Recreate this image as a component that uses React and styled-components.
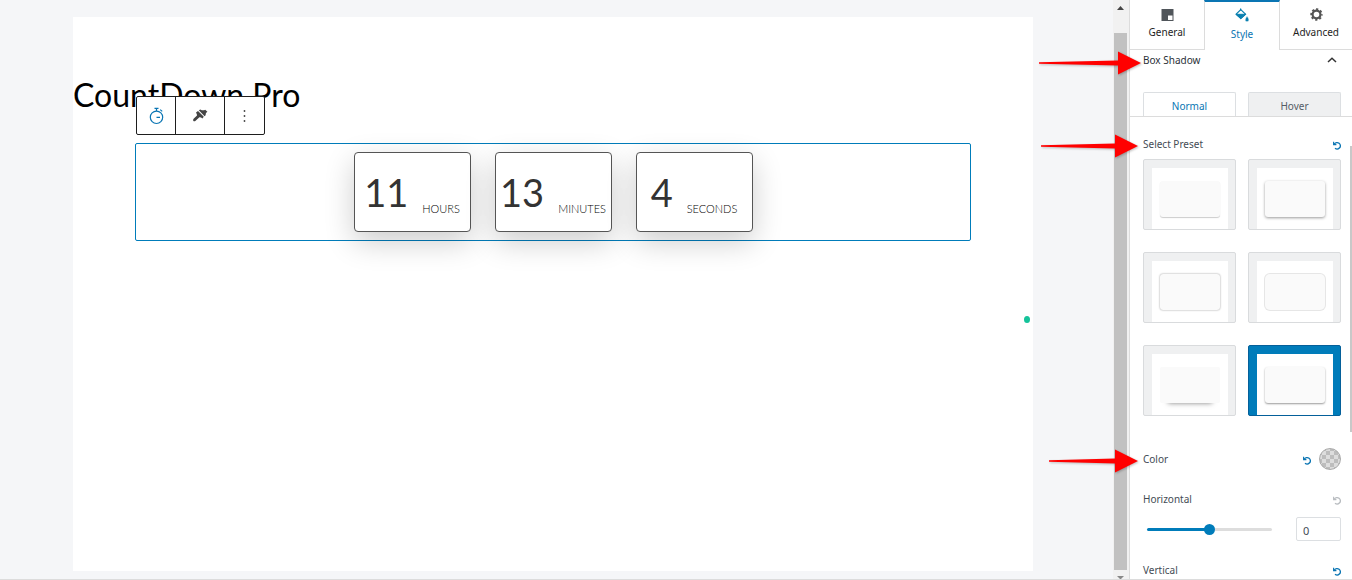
import React, { useState } from "react";
import styled, { createGlobalStyle } from "styled-components";

const GlobalStyle = createGlobalStyle`
  * {
    box-sizing: border-box;
  }

  body {
    margin: 0;
    font-family: "Noto Sans", sans-serif;
    font-size: 10px;
    color: #444c55;
  }

  button, input {
    font-family: inherit;
    font-size: inherit;
  }
`;

const Shell = styled.div`
  display: flex;
  height: 100vh;
  overflow: hidden;
  background-color: #f5f6f8;
  border-bottom: 1px solid #dcdcdc;
`;

const Editor = styled.main`
  flex: 1;
  min-width: 0;
  display: flex;
  padding: 17px 80px 8px 73px;
`;

const Canvas = styled.article`
  position: relative;
  flex: 1;
  background-color: #ffffff;
`;

const Title = styled.h1`
  margin: 52px 0 22px;
  font-family: Lato, sans-serif;
  font-size: 32px;
  font-weight: 400;
  line-height: 52px;
  color: #000000;
`;

const Block = styled.section`
  position: relative;
  display: flex;
  justify-content: center;
  gap: 24px;
  margin: 0 62px;
  padding: 8px;
  border: 1px solid #007cba;
  border-radius: 2px;
`;

const Toolbar = styled.div`
  position: absolute;
  left: 0;
  bottom: calc(100% + 9px);
  display: flex;
  background-color: #ffffff;
  border: 1px solid #1e1e1e;
  border-radius: 2px;
`;

const ToolButton = styled.button`
  display: flex;
  align-items: center;
  justify-content: center;
  width: ${(props) => props.$width}px;
  height: 37px;
  padding: 0;
  border: none;
  border-left: ${(props) => (props.$first ? "none" : "1px solid #1e1e1e")};
  background: none;
  color: ${(props) => (props.$first ? "#0a75b3" : "#444444")};
  cursor: pointer;
`;

const TimeBox = styled.div`
  display: flex;
  align-items: center;
  justify-content: center;
  gap: 14px;
  width: 117px;
  height: 80px;
  border: 1px solid #555555;
  border-radius: 4px;
  background-color: #ffffff;
  box-shadow: 0 10px 30px rgba(0, 0, 0, 0.2);
  font-family: Lato, sans-serif;
  color: #333333;
`;

const Digits = styled.span`
  font-size: 38px;
  line-height: 48px;
`;

const Unit = styled.span`
  padding-top: 34px;
  font-size: 11px;
  font-weight: 300;
  line-height: 14px;
  text-transform: uppercase;
  color: #000000;
`;

const StatusDot = styled.span`
  position: absolute;
  top: 299px;
  right: 3px;
  width: 6px;
  height: 7px;
  border-radius: 50%;
  background-color: #15c39a;
`;

const ScrollTrack = styled.div`
  display: flex;
  flex-direction: column;
  align-items: center;
  justify-content: space-between;
  width: 16px;
  padding: 6px 1px 0 0;
  background-color: #f1f1f1;
`;

const ScrollThumb = styled.div`
  flex: 1;
  width: 13px;
  margin: 23px 0 6px;
  background-color: #c1c1c1;
`;

const Sidebar = styled.aside`
  position: relative;
  width: 223px;
  flex-shrink: 0;
  border-left: 1px solid #dcdcdc;
  background-color: #ffffff;
`;

const Tabs = styled.div`
  display: grid;
  grid-template-columns: 74px 76px 1fr;
  height: 50px;
`;

const Tab = styled.button`
  display: flex;
  flex-direction: column;
  align-items: center;
  gap: ${(props) => (props.$active ? 3 : 2)}px;
  padding: ${(props) => (props.$active ? 6 : 7)}px 0 0;
  border: solid #dcdcdc;
  border-width: ${(props) => (props.$active ? "2px 1px 0" : "0 0 1px")};
  border-top-color: #0a75b3;
  background: none;
  line-height: 16px;
  color: ${(props) => (props.$active ? "#0a75b3" : "#1e1e1e")};
  cursor: pointer;
`;

const PanelHeader = styled.button`
  position: relative;
  display: flex;
  align-items: center;
  justify-content: space-between;
  width: 100%;
  height: 20px;
  padding: 0 15px 0 13px;
  border: none;
  background: none;
  color: #2b3138;
  cursor: pointer;
`;

const SubTabs = styled.div`
  display: grid;
  grid-template-columns: 1fr 1fr;
  gap: 12px;
  margin-top: 22px;
  padding: 0 11px 0 13px;
  border-bottom: 1px solid #dcdcdc;
`;

const SubTab = styled.button`
  height: 24px;
  padding: 2px 0 0;
  border: 1px solid #dcdfe2;
  border-bottom: none;
  border-radius: 2px 2px 0 0;
  background-color: ${(props) => (props.$active ? "#ffffff" : "#eff0f1")};
  color: ${(props) => (props.$active ? "#0a75b3" : "#555d66")};
  cursor: pointer;
`;

const Controls = styled.div`
  display: flex;
  flex-direction: column;
  padding: 16px 11px 0 13px;
`;

const Row = styled.div`
  position: relative;
  display: flex;
  align-items: center;
  gap: 8px;
  height: 22px;
`;

const ColorRow = styled(Row)`
  margin-bottom: 18px;
`;

const Label = styled.label`
  flex: 1;
`;

const ResetButton = styled.button`
  display: flex;
  padding: 2px 0 0;
  border: none;
  background: none;
  color: ${(props) => (props.disabled ? "#b8bcc0" : "#0a75b3")};
  cursor: pointer;
`;

const PresetGrid = styled.div`
  display: grid;
  grid-template-columns: 1fr 1fr;
  gap: 22px 12px;
  margin: 4px 0 32px;
`;

const Preset = styled.label`
  height: 71px;
  padding: 8px 7px 0 8px;
  border: 1px solid ${(props) => (props.$active ? "#05609a" : "#d9dbdd")};
  border-radius: 2px;
  background-color: ${(props) => (props.$active ? "#007cba" : "#eff0f1")};
  cursor: pointer;
`;

const PresetRadio = styled.input`
  position: absolute;
  opacity: 0;
`;

const PresetStage = styled.span`
  display: flex;
  justify-content: center;
  height: 61px;
  padding-top: 13px;
  background-color: #ffffff;
`;

const PresetSample = styled.span`
  width: 60px;
  height: 36px;
  border-radius: ${(props) => props.$radius}px;
  background-color: #fafafa;
  box-shadow: ${(props) => props.$shadow};
`;

const Swatch = styled.button`
  width: 22px;
  height: 22px;
  padding: 0;
  border: 1px solid #aaaaaa;
  border-radius: 50%;
  background: repeating-conic-gradient(#bdbdbd 0 25%, #dddddd 0 50%) 50% / 8px 8px;
  cursor: pointer;
`;

const SliderRow = styled.div`
  display: flex;
  align-items: center;
  justify-content: space-between;
  margin: 7px 0 18px;
  padding-left: 4px;
`;

const Slider = styled.input`
  width: 125px;
  height: 11px;
  margin: 0;
  appearance: none;
  background: none;

  &::-webkit-slider-runnable-track {
    height: 3px;
    border-radius: 2px;
    background: linear-gradient(to right, #007cba 50%, #dddddd 50%);
  }

  &::-webkit-slider-thumb {
    appearance: none;
    width: 11px;
    height: 11px;
    margin-top: -4px;
    border-radius: 50%;
    background-color: #007cba;
  }
`;

const NumberInput = styled.input`
  width: 45px;
  height: 24px;
  padding: 2px 6px 0;
  border: 1px solid #dcdfe2;
  border-radius: 2px;
  font-size: 11px;
  color: #444c55;
`;

const PanelScroll = styled.div`
  position: absolute;
  top: 146px;
  right: 0;
  width: 2px;
  height: 286px;
  background-color: #c8c8c8;
`;

const ArrowSvg = styled.svg`
  position: absolute;
  right: calc(100% - ${(props) => props.$inset}px);
  top: 1px;
  filter: drop-shadow(1px 1px 1px rgba(0, 0, 0, 0.25));
  pointer-events: none;
`;

function Arrow({ length, inset }) {
  const neck = length - 23;
  return (
    <ArrowSvg $inset={inset} width={length} height="26" aria-hidden="true">
      <path
        d={`M0 11.3 L${neck} 9.5 V0.5 L${length} 12 L${neck} 23.5 V14.5 L0 12.7 Z`}
        fill="#ff0000"
      />
    </ArrowSvg>
  );
}

function ResetIcon() {
  return (
    <svg width="8" height="9" viewBox="0 0 8 9" fill="none" stroke="currentColor">
      <path d="M0.6 0.8 V3.6 H3.4" strokeWidth="1.1" />
      <path d="M1 3.4 C2.2 1.5 4.6 1.2 6.1 2.3 C7.7 3.5 7.8 5.8 6.4 7.1 C5.2 8.2 3.2 8.2 2 7.2" strokeWidth="1.3" />
    </svg>
  );
}

function TimerIcon() {
  return (
    <svg width="18" height="18" viewBox="0 0 18 18" fill="none" stroke="currentColor" strokeWidth="1.2">
      <circle cx="9.5" cy="10.3" r="6.2" />
      <path d="M7.5 1.4 H11.5 M9.5 1.4 V4 M13.2 2.6 L15.2 4.4 M9.5 10.4 H13" />
    </svg>
  );
}

function BrushIcon() {
  return (
    <svg width="16" height="16" viewBox="0 0 16 16" fill="currentColor">
      <path d="M4 4.4 L6 3 L11.8 8.8 L10.4 10.4 Q8.8 9 7.4 9.2 L3.6 12.8 Q2.4 13.8 1.4 13 Q0.6 12 1.6 10.8 L5 7.6 Q5.2 6.2 4 4.4 Z" />
      <path d="M6.8 2.3 L8.4 1.4 Q10.8 3 13.2 1.8 L15.4 3.8 Q13.4 4.6 13.6 7.2 L12.6 8.2 Z" />
    </svg>
  );
}

function DotsIcon() {
  return (
    <svg width="4" height="14" viewBox="0 0 4 14" fill="currentColor">
      <circle cx="1.5" cy="2" r="0.9" />
      <circle cx="1.5" cy="7" r="0.9" />
      <circle cx="1.5" cy="12" r="0.9" />
    </svg>
  );
}

function GeneralIcon() {
  return (
    <svg width="15" height="15" viewBox="0 0 15 15">
      <path d="M1.5 2 H13.5 V14 H1.5 Z" fill="#50555a" />
      <path d="M8 8.5 H12.5 V13 H8 Z" fill="#ffffff" />
    </svg>
  );
}

function FillIcon() {
  return (
    <svg width="15" height="15" viewBox="0 0 15 15" fill="none" stroke="#0a80b0">
      <path d="M5.6 2.6 V0.4" strokeWidth="1.2" />
      <path d="M5.8 1.6 L10.6 6.3 L5.8 10.6 L1 6.3 Z" strokeWidth="1.1" />
      <path d="M1 6.3 H10.6 L5.8 10.6 Z" fill="#0a80b0" />
      <path d="M12 8 Q14.6 11.4 13.8 12.8 Q12 14.8 10.2 12.8 Q9.6 11.4 12 8 Z" fill="#0a80b0" stroke="#ffffff" strokeWidth="0.5" />
    </svg>
  );
}

function GearIcon() {
  return (
    <svg width="15" height="15" viewBox="0 0 15 15" fill="none" stroke="#555555">
      <circle cx="7.5" cy="7.5" r="3.9" strokeWidth="2.2" />
      <circle cx="7.5" cy="7.5" r="5.3" strokeWidth="1.8" strokeDasharray="2.2 1.963" strokeDashoffset="1.1" />
    </svg>
  );
}

const units = [
  { value: 11, name: "Hours" },
  { value: 13, name: "Minutes" },
  { value: 4, name: "Seconds" },
];

const presets = [
  { radius: 3, shadow: "0 1px 1px rgba(0, 0, 0, 0.2)" },
  { radius: 3, shadow: "0 1px 3px rgba(0, 0, 0, 0.4)" },
  { radius: 3, shadow: "0 0 2px rgba(0, 0, 0, 0.45)" },
  { radius: 5, shadow: "0 0 0 1px #e6e6e6" },
  { radius: 2, shadow: "0 8px 5px -8px rgba(0, 0, 0, 0.5)" },
  { radius: 3, shadow: "0 1px 2px rgba(0, 0, 0, 0.4)" },
];

function App() {
  const [preset, setPreset] = useState(5);
  const [horizontal, setHorizontal] = useState(0);

  return (
    <>
      <GlobalStyle />
      <Shell>
        <Editor>
          <Canvas>
            <Title>CountDown Pro</Title>
            <Block>
              <Toolbar>
                <ToolButton $first $width={38} aria-label="Countdown">
                  <TimerIcon />
                </ToolButton>
                <ToolButton $width={49} aria-label="Styles">
                  <BrushIcon />
                </ToolButton>
                <ToolButton $width={40} aria-label="More options">
                  <DotsIcon />
                </ToolButton>
              </Toolbar>
              {units.map((unit) => (
                <TimeBox key={unit.name}>
                  <Digits>{unit.value}</Digits>
                  <Unit>{unit.name}</Unit>
                </TimeBox>
              ))}
            </Block>
            <StatusDot />
          </Canvas>
        </Editor>

        <ScrollTrack>
          <svg width="7" height="4" viewBox="0 0 7 4">
            <path d="M0 4 L3.5 0 L7 4 Z" fill="#444444" />
          </svg>
          <ScrollThumb />
          <svg width="7" height="3" viewBox="0 0 7 3">
            <path d="M0 0 H7 L4 3 H3 Z" fill="#888888" />
          </svg>
        </ScrollTrack>

        <Sidebar>
          <Tabs>
            <Tab>
              <GeneralIcon />
              General
            </Tab>
            <Tab $active>
              <FillIcon />
              Style
            </Tab>
            <Tab>
              <GearIcon />
              Advanced
            </Tab>
          </Tabs>

          <PanelHeader>
            <Arrow length={102} inset={11} />
            Box Shadow
            <svg width="10" height="6" viewBox="0 0 10 6" fill="none" stroke="#333333" strokeWidth="1.5">
              <path d="M1 5 L5 1.2 L9 5" />
            </svg>
          </PanelHeader>

          <SubTabs>
            <SubTab $active>Normal</SubTab>
            <SubTab>Hover</SubTab>
          </SubTabs>

          <Controls>
            <Row>
              <Arrow length={97} inset={-5} />
              <Label as="span">Select Preset</Label>
              <ResetButton aria-label="Reset preset">
                <ResetIcon />
              </ResetButton>
            </Row>
            <PresetGrid>
              {presets.map((item, index) => (
                <Preset key={index} $active={preset === index}>
                  <PresetRadio
                    type="radio"
                    name="preset"
                    aria-label={`Preset ${index + 1}`}
                    checked={preset === index}
                    onChange={() => setPreset(index)}
                  />
                  <PresetStage>
                    <PresetSample $radius={item.radius} $shadow={item.shadow} />
                  </PresetStage>
                </Preset>
              ))}
            </PresetGrid>

            <ColorRow>
              <Arrow length={89} inset={-5} />
              <Label htmlFor="color">Color</Label>
              <ResetButton aria-label="Reset color">
                <ResetIcon />
              </ResetButton>
              <Swatch id="color" />
            </ColorRow>

            <Row>
              <Label htmlFor="horizontal">Horizontal</Label>
              <ResetButton disabled aria-label="Reset horizontal">
                <ResetIcon />
              </ResetButton>
            </Row>
            <SliderRow>
              <Slider
                id="horizontal"
                type="range"
                min="-100"
                max="100"
                value={horizontal}
                onChange={(e) => setHorizontal(Number(e.target.value))}
              />
              <NumberInput
                type="text"
                aria-label="Horizontal value"
                value={horizontal}
                onChange={(e) => setHorizontal(Number(e.target.value) || 0)}
              />
            </SliderRow>

            <Row>
              <Label as="span">Vertical</Label>
              <ResetButton aria-label="Reset vertical">
                <ResetIcon />
              </ResetButton>
            </Row>
          </Controls>
          <PanelScroll />
        </Sidebar>
      </Shell>
    </>
  );
}

export default App;
